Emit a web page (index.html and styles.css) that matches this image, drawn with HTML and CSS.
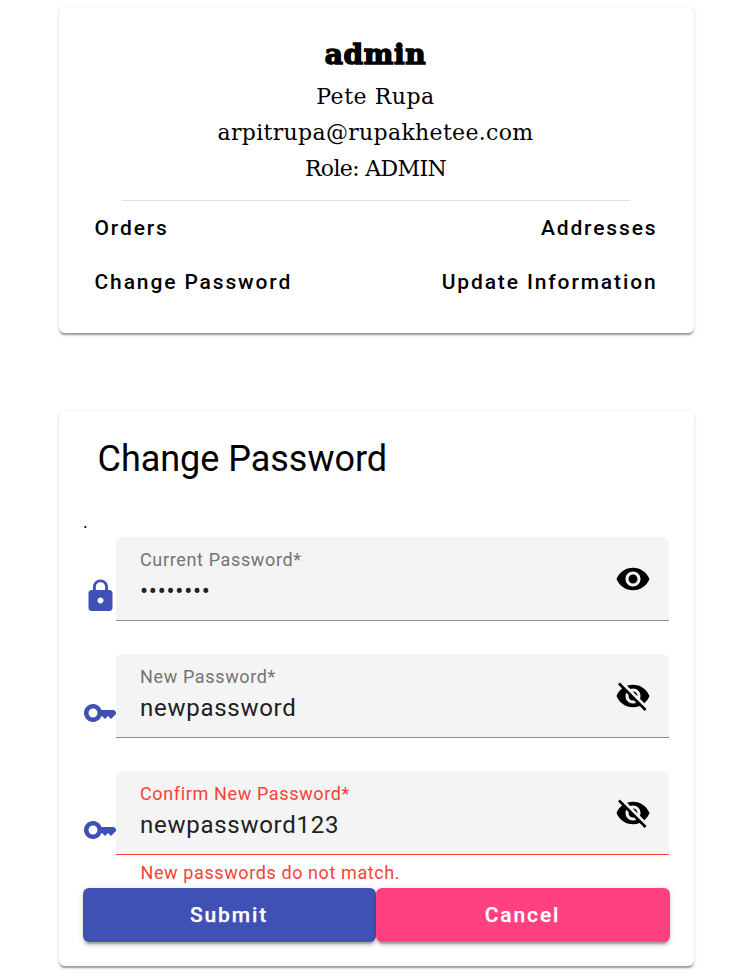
FILE: index.html
```html
<!DOCTYPE html>
<html lang="en">
<head>
<meta charset="utf-8">
<title>Change Password</title>
<link rel="stylesheet" href="styles.css">
</head>
<body>
<main class="page">
  <section class="card profile">
    <div class="identity">
      <h1 class="username"><span>admin</span></h1>
      <p><span class="name">Pete Rupa</span></p>
      <p><span class="email">arpitrupa@rupakhetee.com</span></p>
      <p><span class="role">Role: ADMIN</span></p>
    </div>
    <hr class="divider">
    <nav class="links">
      <a>Orders</a><a>Addresses</a>
      <a>Change Password</a><a>Update Information</a>
    </nav>
  </section>

  <section class="card form">
    <h2 class="title">Change Password</h2>
    <div class="dot">.</div>
    <div class="row">
      <svg class="icon lead" viewBox="0 0 24 24"><path d="M18 8h-1V6c0-2.76-2.24-5-5-5S7 3.24 7 6v2H6c-1.1 0-2 .9-2 2v10c0 1.1.9 2 2 2h12c1.100 0 2-.9 2-2V10c0-1.100-.9-2-2-2zm-6 9c-1.100 0-2-.9-2-2s.9-2 2-2 2 .9 2 2-.9 2-2 2zM15.100 8H8.900V6c0-1.710 1.390-3.100 3.100-3.100s3.100 1.390 3.100 3.100v2z"/></svg>
      <div class="field">
        <div class="text"><span class="label">Current Password*</span><span class="value masked">••••••••</span></div>
        <svg class="icon" viewBox="0 0 24 24"><path d="M12 4.500C7 4.500 2.730 7.610 1 12c1.730 4.390 6 7.500 11 7.500s9.270-3.110 11-7.500c-1.730-4.390-6-7.500-11-7.500zM12 17c-2.760 0-5-2.240-5-5s2.240-5 5-5 5 2.240 5 5-2.240 5-5 5zm0-8c-1.660 0-3 1.340-3 3s1.340 3 3 3 3-1.340 3-3-1.340-3-3-3z"/></svg>
      </div>
    </div>
    <div class="row">
      <svg class="icon lead" viewBox="0 0 24 24"><path d="M21 10h-8.350C11.830 7.670 9.610 6 7 6c-3.310 0-6 2.690-6 6s2.690 6 6 6c2.610 0 4.830-1.670 5.650-4H13l2 2 2-2 2 2 4-4.040L21 10zM7 15c-1.650 0-3-1.350-3-3s1.350-3 3-3 3 1.350 3 3-1.350 3-3 3z"/></svg>
      <div class="field">
        <div class="text"><span class="label">New Password*</span><span class="value">newpassword</span></div>
        <svg class="icon" viewBox="0 0 24 24"><path d="M12 7c2.760 0 5 2.240 5 5 0 .65-.13 1.260-.36 1.830l2.920 2.920c1.510-1.260 2.700-2.890 3.430-4.750-1.730-4.390-6-7.500-11-7.500-1.400 0-2.740.25-3.980.7l2.160 2.160C10.740 7.130 11.350 7 12 7zM2 4.270l2.280 2.280.46.46C3.080 8.300 1.780 10.020 1 12c1.730 4.390 6 7.500 11 7.500 1.550 0 3.030-.3 4.380-.84l.42.42L19.730 22 21 20.730 3.270 3 2 4.270zM7.530 9.800l1.550 1.550c-.05.21-.08.43-.08.65 0 1.660 1.340 3 3 3 .22 0 .44-.03.65-.08l1.550 1.550c-.67.33-1.410.53-2.200.53-2.760 0-5-2.240-5-5 0-.79.2-1.530.53-2.200zm4.310-.78l3.150 3.150.02-.16c0-1.660-1.340-3-3-3l-.17.01z"/></svg>
      </div>
    </div>
    <div class="row invalid">
      <svg class="icon lead" viewBox="0 0 24 24"><path d="M21 10h-8.350C11.830 7.670 9.610 6 7 6c-3.310 0-6 2.690-6 6s2.690 6 6 6c2.610 0 4.830-1.670 5.650-4H13l2 2 2-2 2 2 4-4.040L21 10zM7 15c-1.650 0-3-1.350-3-3s1.350-3 3-3 3 1.350 3 3-1.350 3-3 3z"/></svg>
      <div class="field">
        <div class="text"><span class="label">Confirm New Password*</span><span class="value">newpassword123</span></div>
        <svg class="icon" viewBox="0 0 24 24"><path d="M12 7c2.760 0 5 2.240 5 5 0 .65-.13 1.260-.36 1.830l2.920 2.920c1.510-1.260 2.700-2.890 3.430-4.750-1.730-4.390-6-7.500-11-7.500-1.400 0-2.740.25-3.980.7l2.160 2.160C10.740 7.130 11.350 7 12 7zM2 4.270l2.280 2.280.46.46C3.080 8.300 1.780 10.020 1 12c1.730 4.390 6 7.500 11 7.500 1.550 0 3.030-.3 4.380-.84l.42.42L19.730 22 21 20.730 3.270 3 2 4.270zM7.530 9.800l1.550 1.550c-.05.21-.08.43-.08.65 0 1.660 1.340 3 3 3 .22 0 .44-.03.65-.08l1.550 1.550c-.67.33-1.410.53-2.200.53-2.760 0-5-2.240-5-5 0-.79.2-1.530.53-2.200zm4.310-.78l3.150 3.150.02-.16c0-1.660-1.340-3-3-3l-.17.01z"/></svg>
      </div>
    </div>
    <p class="error">New passwords do not match.</p>
    <div class="actions">
      <button class="submit">Submit</button><button class="cancel">Cancel</button>
    </div>
  </section>
</main>
</body>
</html>
```
FILE: styles.css
```css
* { box-sizing: border-box; }
body {
  margin: 0;
  min-height: 978px;
  padding: 7px 0 12px 59px;
  background: #fff;
  color: #000;
  font-family: Roboto, sans-serif;
}
h1, h2, p { margin: 0; font-weight: 400; }
.page {
  display: flex;
  flex-direction: column;
  gap: 78px;
  width: 635px;
}
.card {
  border-radius: 6px;
  background: #fff;
  box-shadow: 0 3px 1.5px -1.5px rgba(0,0,0,.2), 0 1.5px 1.5px rgba(0,0,0,.14), 0 1.5px 4.5px rgba(0,0,0,.12);
}
.profile { height: 326px; padding-top: 24px; }
.identity {
  padding-right: 2px;
  font-family: "DejaVu Serif", serif;
  font-size: 22px;
  line-height: 36px;
  text-align: center;
}
.identity .username {
  height: 48px;
  font-size: 28px;
  font-weight: 700;
  line-height: 48px;
  letter-spacing: .6px;
  -webkit-text-stroke: 1.5px #000;
}
.name { letter-spacing: .55px; }
.email { letter-spacing: .33px; }
.role { letter-spacing: -.65px; }
.divider {
  width: 508px;
  height: 1px;
  margin: 13px 0 0 63px;
  border: 0;
  background: #e0e0e0;
}
.links {
  display: grid;
  grid-template-columns: 1fr 1fr;
  padding: 0 36.5px 0 35.5px;
  font-size: 21px;
  font-weight: 500;
  line-height: 54px;
  letter-spacing: 1.875px;
}
.links a:nth-child(even) { text-align: right; }
.form { height: 555px; padding: 24px 24px 0; }
.title {
  height: 78px;
  padding-left: 14.5px;
  font-size: 36px;
  line-height: 48px;
  letter-spacing: -.03px;
}
.dot { height: 24px; font-size: 18px; line-height: 17px; }
.row { display: flex; align-items: center; height: 84px; margin-bottom: 33px; }
.icon { flex: none; width: 36px; height: 36px; fill: #000; }
.lead { margin: 33px -2.5px 0 -.5px; fill: #3f51b5; transform: translateX(-.5px); }
.row.invalid { margin-bottom: 0; }
.field {
  position: relative;
  display: flex;
  flex: none;
  justify-content: space-between;
  width: 553px;
  height: 84px;
  padding: 0 18px 0 24px;
  border-bottom: 1px solid #8c8c8c;
  border-radius: 6px 6px 0 0;
  background: #f4f4f4;
}
.field .icon { margin-top: 24px; }
.text { display: flex; flex-direction: column; padding-top: 10px; }
.label { color: #737373; font-size: 18px; line-height: 26px; letter-spacing: .64px; }
.value { color: #212121; font-size: 24px; line-height: 36px; letter-spacing: .73px; }
.invalid .field { border-color: #f44336; }
.invalid .label, .error { color: #f44336; }
.error {
  height: 33px;
  padding: 4px 0 0 57.5px;
  font-size: 18px;
  line-height: 28px;
  letter-spacing: .6px;
}
.actions { display: grid; grid-template-columns: 293px 294px; }
.actions button {
  height: 54px;
  padding: 0 1px 0 0;
  border: 0;
  border-radius: 6px;
  color: #fff;
  font: 500 21px Roboto, sans-serif;
  letter-spacing: 1.875px;
  -webkit-text-stroke: .25px #fff;
  box-shadow: 0 4.5px 1.5px -3px rgba(0,0,0,.2), 0 3px 3px rgba(0,0,0,.14), 0 1.5px 7.5px rgba(0,0,0,.12);
}
.actions .submit { background: #3f51b5; }
.actions .cancel { background: #ff4081; }
```
